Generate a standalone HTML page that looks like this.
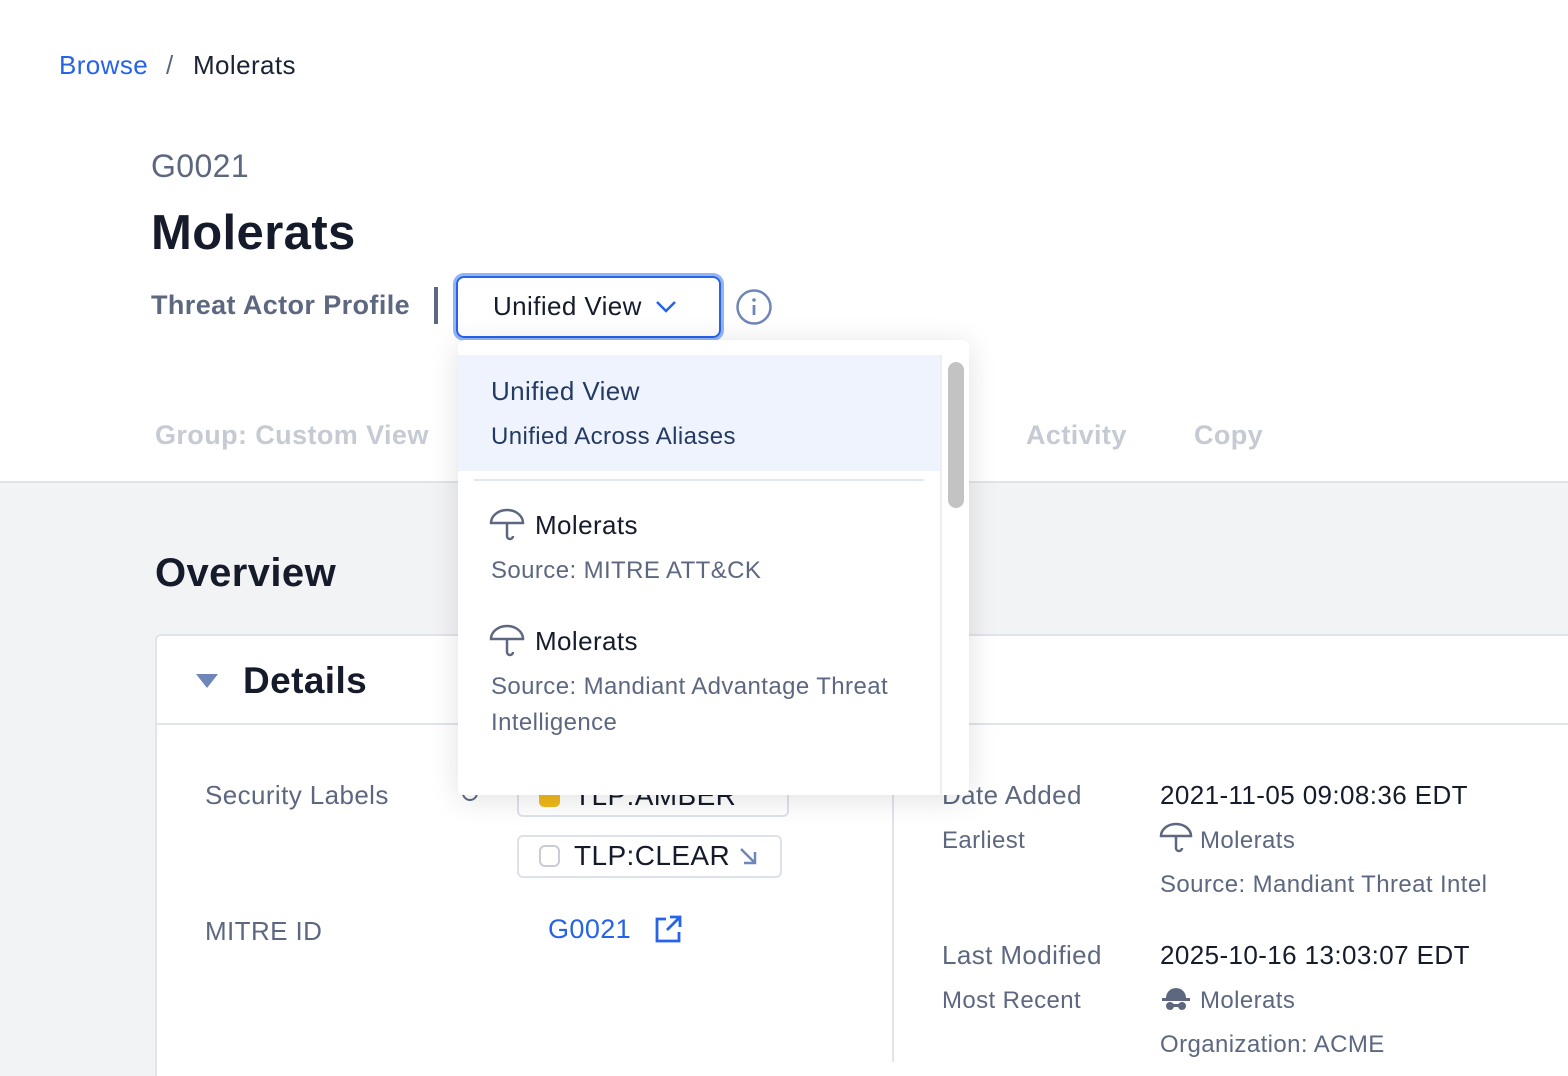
<!DOCTYPE html>
<html><head><meta charset="utf-8"><style>
*{margin:0;padding:0;box-sizing:border-box}
html,body{width:1568px;height:1076px;overflow:hidden}
body{font-family:"Liberation Sans",sans-serif;background:#fff;position:relative;color:#1a2233;letter-spacing:0.4px}
.a{position:absolute;white-space:nowrap}
.gray{position:absolute;left:0;top:481px;width:1568px;height:595px;background:#f2f3f5;border-top:2px solid #dfe3ea}
.card{position:absolute;left:155px;top:634px;width:1420px;height:460px;background:#fff;border:2px solid #e0e4eb;border-radius:6px}
.lbl{color:#5d6880;font-size:26px}
.sub{color:#5d6880;font-size:24px}
.val{color:#151b2b;font-size:26px}
.chip{position:absolute;height:43px;border:2px solid #dde2ea;border-radius:6px;background:#fff}
.dd{position:absolute;left:458px;top:340px;width:511px;height:455px;background:#fff;border-radius:6px;box-shadow:0 4px 30px rgba(0,0,0,.12);overflow:hidden}
</style></head><body>
<div class="a" style="left:59px;top:50px;font-size:26px;color:#2563eb">Browse</div>
<div class="a" style="left:166px;top:50px;font-size:26px;color:#5d6880">/</div>
<div class="a" style="left:193px;top:50px;font-size:26px;color:#1a2233">Molerats</div>
<div class="a" style="left:151px;top:148px;font-size:32px;color:#5d6880">G0021</div>
<div class="a" style="left:151px;top:205px;font-size:49px;font-weight:bold;color:#151b2b">Molerats</div>
<div class="a" style="left:151px;top:290px;font-size:27px;font-weight:bold;color:#5d6880">Threat Actor Profile</div>
<div class="a" style="left:434px;top:287px;width:4px;height:37px;background:#5d6880"></div>
<div class="a" style="left:456px;top:276px;width:265px;height:62px;border:2px solid #2563eb;border-radius:8px;box-shadow:0 0 0 3px #93b4f5"></div>
<div class="a" style="left:493px;top:291px;font-size:26px;color:#151b2b">Unified View</div>
<svg class="a" style="left:655px;top:298px" width="22" height="16" viewBox="0 0 22 16"><path d="M2 4l9 9 9-9" fill="none" stroke="#2563eb" stroke-width="2.5"/></svg>
<svg class="a" style="left:735px;top:288px" width="38" height="38" viewBox="0 0 38 38"><circle cx="19" cy="19" r="16.5" fill="none" stroke="#6f86b8" stroke-width="2.5"/><circle cx="19" cy="12" r="1.8" fill="#6f86b8"/><path d="M19 17v10" stroke="#6f86b8" stroke-width="2.8"/></svg>
<div class="a" style="left:155px;top:420px;font-size:27px;font-weight:bold;color:#c5cad3">Group: Custom View</div>
<div class="a" style="left:1026px;top:420px;font-size:27px;font-weight:bold;color:#c5cad3">Activity</div>
<div class="a" style="left:1194px;top:420px;font-size:27px;font-weight:bold;color:#c5cad3">Copy</div>
<div class="gray"></div>
<div class="a" style="left:155px;top:551px;font-size:40px;font-weight:bold;color:#151b2b">Overview</div>
<div class="card"></div>
<div class="a" style="left:157px;top:723px;width:1420px;height:2px;background:#e0e4eb"></div>
<svg class="a" style="left:195px;top:673px" width="24" height="16"><path d="M1 1h22L12 15z" fill="#6f86b8"/></svg>
<div class="a" style="left:243px;top:660px;font-size:37px;font-weight:bold;color:#151b2b">Details</div>
<div class="a" style="left:892px;top:740px;width:2px;height:322px;background:#e0e4eb"></div>
<div class="a lbl" style="left:205px;top:780px">Security Labels</div>
<div class="a lbl" style="left:205px;top:916px">MITRE ID</div>
<div class="a" style="left:462px;top:785px;width:16px;height:16px;border:2.5px solid #5d6880;border-radius:50%"></div>
<div class="chip" style="left:517px;top:774px;width:272px"></div>
<div class="a" style="left:539px;top:787px;width:21px;height:20px;background:#f0b81b;border-radius:5px"></div>
<div class="a val" style="left:574px;top:780px;font-size:28px">TLP:AMBER</div>
<div class="chip" style="left:517px;top:835px;width:265px"></div>
<div class="a" style="left:539px;top:845px;width:21px;height:22px;border:2px solid #c8ccd4;border-radius:6px"></div>
<div class="a val" style="left:574px;top:840px;font-size:28px">TLP:CLEAR</div>
<svg class="a" style="left:738px;top:846px" width="20" height="20"><path d="M3 3l14 14M6 17h11V6" fill="none" stroke="#6f86b8" stroke-width="2.5"/></svg>
<div class="a" style="left:548px;top:914px;font-size:27px;color:#2563eb">G0021</div>
<svg class="a" style="left:653px;top:914px" width="30" height="30" viewBox="0 0 30 30"><path d="M13 5H4v22h22v-9M17 3h10v10M27 3L14 16" fill="none" stroke="#2563eb" stroke-width="2.8"/></svg>
<div class="a lbl" style="left:942px;top:780px">Date Added</div>
<div class="a sub" style="left:942px;top:827px">Earliest</div>
<div class="a val" style="left:1160px;top:780px">2021-11-05 09:08:36 EDT</div>
<svg class="a" style="left:1159px;top:822px" width="34" height="32" viewBox="0 0 34 32"><path d="M2 14a15 12 0 0 1 30 0zM17 14v12a3 3 0 0 0 6 0" fill="none" stroke="#5d6880" stroke-width="2.5"/></svg>
<div class="a sub" style="left:1200px;top:827px">Molerats</div>
<div class="a sub" style="left:1160px;top:871px">Source: Mandiant Threat Intel</div>
<div class="a lbl" style="left:942px;top:940px">Last Modified</div>
<div class="a sub" style="left:942px;top:987px">Most Recent</div>
<div class="a val" style="left:1160px;top:940px">2025-10-16 13:03:07 EDT</div>
<svg class="a" style="left:1161px;top:986px" width="30" height="26" viewBox="0 0 30 26"><path d="M5 12a10 10 0 0 1 20 0z" fill="#5d6880"/><rect x="1" y="12" width="28" height="3" fill="#5d6880"/><circle cx="9" cy="20" r="4" fill="#5d6880"/><circle cx="21" cy="20" r="4" fill="#5d6880"/><rect x="9" y="18" width="12" height="3" fill="#5d6880"/></svg>
<div class="a sub" style="left:1200px;top:987px">Molerats</div>
<div class="a sub" style="left:1160px;top:1031px">Organization: ACME</div>
<div class="dd">
<div class="a" style="left:0;top:15px;width:482px;height:116px;background:#eef3fd"></div>
<div class="a" style="left:33px;top:36px;font-size:26px;color:#243a63">Unified View</div>
<div class="a" style="left:33px;top:83px;font-size:24px;color:#243a63">Unified Across Aliases</div>
<div class="a" style="left:16px;top:139px;width:450px;height:2px;background:#e3e8f0"></div>
<div class="a" style="left:482px;top:15px;width:2px;height:440px;background:#eceef2"></div>
<div class="a" style="left:490px;top:22px;width:16px;height:146px;background:#c3c3c3;border-radius:8px"></div>
<svg class="a" style="left:31px;top:168px" width="36" height="34" viewBox="0 0 36 34"><path d="M2 15a16 13 0 0 1 32 0zM18 15v13a3 3 0 0 0 6 0" fill="none" stroke="#5d6880" stroke-width="2.5"/></svg>
<div class="a" style="left:77px;top:170px;font-size:26px;color:#151b2b">Molerats</div>
<div class="a sub" style="left:33px;top:217px;font-size:24px">Source: MITRE ATT&amp;CK</div>
<svg class="a" style="left:31px;top:284px" width="36" height="34" viewBox="0 0 36 34"><path d="M2 15a16 13 0 0 1 32 0zM18 15v13a3 3 0 0 0 6 0" fill="none" stroke="#5d6880" stroke-width="2.5"/></svg>
<div class="a" style="left:77px;top:286px;font-size:26px;color:#151b2b">Molerats</div>
<div class="a sub" style="left:33px;top:333px;font-size:24px">Source: Mandiant Advantage Threat</div>
<div class="a sub" style="left:33px;top:369px;font-size:24px">Intelligence</div>
</div>
</body></html>
